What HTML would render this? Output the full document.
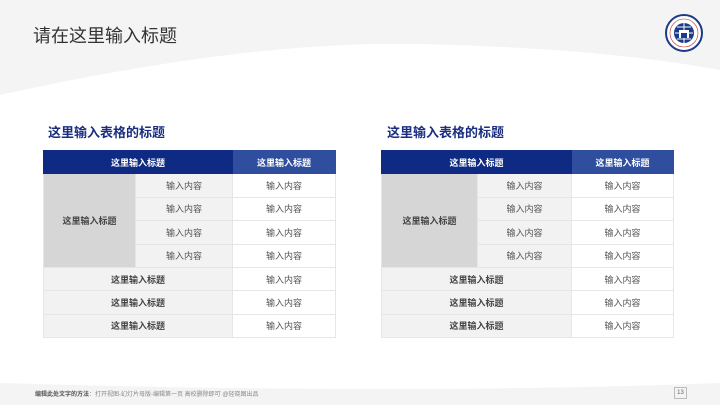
<!DOCTYPE html>
<html><head><meta charset="utf-8"><style>
body{margin:0;width:720px;height:405px;overflow:hidden;background:#fff;font-family:"Liberation Sans","Noto Sans CJK SC",sans-serif;position:relative}
.bg{position:absolute;left:0;top:0;width:720px;height:405px}
.t{position:absolute;left:33px;top:22px;font-size:18px;color:#333}
.h{position:absolute;font-size:13px;font-weight:bold;color:#1a2e80}
table{position:absolute;border-collapse:collapse;font-size:9px;color:#555;table-layout:fixed}
td{height:22.4px;text-align:center;border:1px solid #e6e6e6;padding:0}
.hd{background:#0e2a82;color:#fff;font-weight:bold;border-color:#0e2a82}
.hd2{background:#2f4f9e;color:#fff;font-weight:bold;border-color:#2f4f9e}
.g{background:#d6d6d6;font-weight:bold;color:#444}
.l{background:#f2f2f2}
.b{background:#f2f2f2;font-weight:bold;color:#444}
.foot{position:absolute;left:35px;top:389px;font-size:6px;color:#888}
.pg{position:absolute;left:674px;top:387px;width:11px;height:10px;border:1px solid #bbb;font-size:6px;text-align:center;line-height:10px;color:#666}
</style></head><body>
<svg class="bg" viewBox="0 0 720 405"><rect width="720" height="405" fill="#f4f4f4"/>
<path d="M0 95 Q250 40 420 44 Q600 48 720 70 L720 383 Q400 395 0 383 Z" fill="#fff"/>
<g transform="translate(684,33)"><circle r="18" fill="#fff" stroke="#1a3a8a" stroke-width="2"/><circle r="14" fill="none" stroke="#b33" stroke-width="0.6"/><circle r="10" fill="#1a3a8a"/><path d="M-9 0H9M0-10V10M-7-6H7M-7 6H7" stroke="#fff" stroke-width="1"/><rect x="-5" y="-3" width="10" height="8" fill="#fff"/><rect x="-3" y="0" width="6" height="5" fill="#1a3a8a"/></g></svg>
<div class="t">请在这里输入标题</div>
<div class="h" style="left:48px;top:122px">这里输入表格的标题</div>
<div class="h" style="left:387px;top:122px">这里输入表格的标题</div>
<table style="left:43px;top:150px;width:292px"><colgroup><col style="width:92px"><col style="width:97px"><col style="width:103px"></colgroup>
<tr><td class="hd" colspan="2">这里输入标题</td><td class="hd2">这里输入标题</td></tr>
<tr><td class="g" rowspan="4">这里输入标题</td><td class="l">输入内容</td><td>输入内容</td></tr>
<tr><td class="l">输入内容</td><td>输入内容</td></tr>
<tr><td class="l">输入内容</td><td>输入内容</td></tr>
<tr><td class="l">输入内容</td><td>输入内容</td></tr>
<tr><td class="b" colspan="2">这里输入标题</td><td>输入内容</td></tr>
<tr><td class="b" colspan="2">这里输入标题</td><td>输入内容</td></tr>
<tr><td class="b" colspan="2">这里输入标题</td><td>输入内容</td></tr>
</table>
<table style="left:381px;top:150px;width:292px"><colgroup><col style="width:96px"><col style="width:94px"><col style="width:102px"></colgroup>
<tr><td class="hd" colspan="2">这里输入标题</td><td class="hd2">这里输入标题</td></tr>
<tr><td class="g" rowspan="4">这里输入标题</td><td class="l">输入内容</td><td>输入内容</td></tr>
<tr><td class="l">输入内容</td><td>输入内容</td></tr>
<tr><td class="l">输入内容</td><td>输入内容</td></tr>
<tr><td class="l">输入内容</td><td>输入内容</td></tr>
<tr><td class="b" colspan="2">这里输入标题</td><td>输入内容</td></tr>
<tr><td class="b" colspan="2">这里输入标题</td><td>输入内容</td></tr>
<tr><td class="b" colspan="2">这里输入标题</td><td>输入内容</td></tr>
</table>
<div class="foot"><b style="color:#555">编辑此处文字的方法</b>：打开视图-幻灯片母版-编辑第一页 高校删除即可 @轻晓图出品</div>
<div class="pg">13</div>
</body></html>
